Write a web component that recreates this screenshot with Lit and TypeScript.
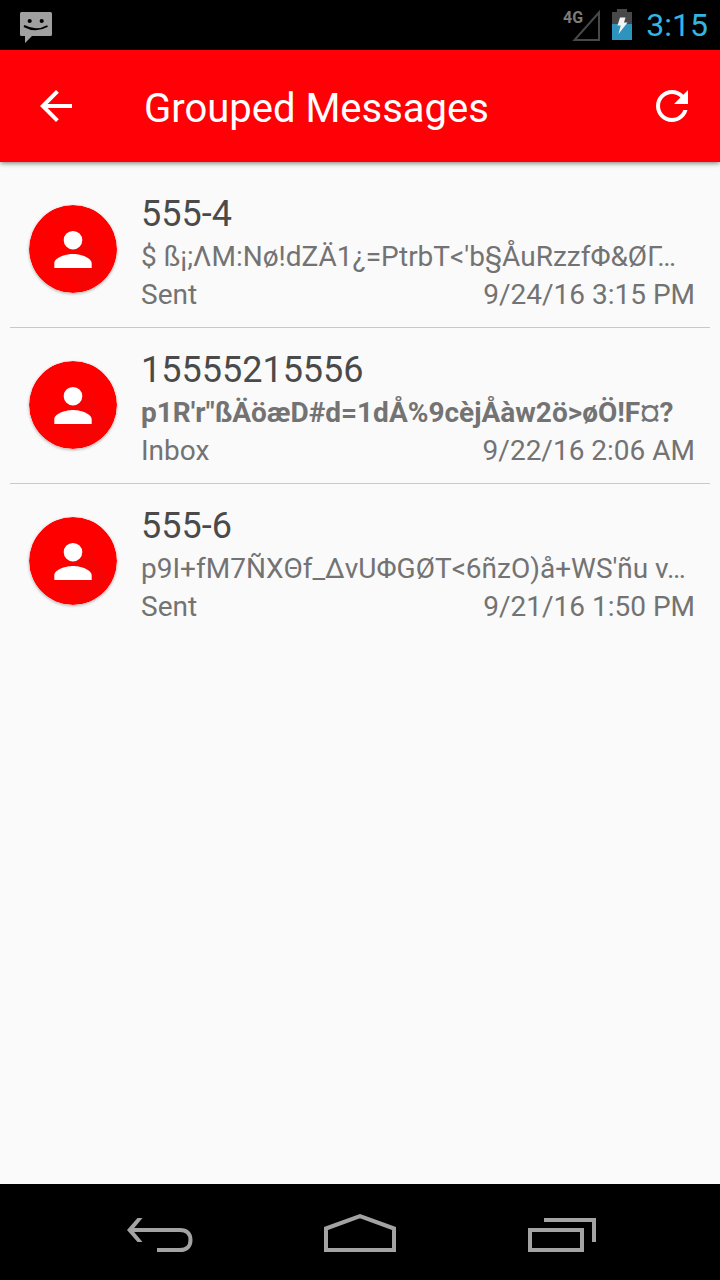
import { LitElement, html, css, svg } from "lit";
import { customElement, property } from "lit/decorators.js";

interface Message {
  sender: string;
  preview: string;
  folder: string;
  date: string;
  unread?: boolean;
}

const MESSAGES: Message[] = [
  {
    sender: "555-4",
    preview: "$ ß¡;ΛM:Nø!dZÄ1¿=PtrbT<'b§ÅuRzzfΦ&ØΓ…",
    folder: "Sent",
    date: "9/24/16 3:15 PM",
  },
  {
    sender: "15555215556",
    preview: "p1R'r\"ßÄöæD#d=1dÅ%9cèjÅàw2ö>øÖ!F¤?",
    folder: "Inbox",
    date: "9/22/16 2:06 AM",
    unread: true,
  },
  {
    sender: "555-6",
    preview: "p9I+fM7ÑXΘf_ΔvUΦGØT<6ñzO)å+WS'ñu v…",
    folder: "Sent",
    date: "9/21/16 1:50 PM",
  },
];

@customElement("status-bar")
export class StatusBar extends LitElement {
  static styles = css`
    :host {
      display: flex;
      align-items: center;
      height: 50px;
      padding: 0 12px 0 20px;
      background: #000;
      color: #33b5e5;
      font-size: 32px;
      line-height: 50px;
    }
    svg {
      display: block;
      flex: none;
    }
    .signal {
      margin-left: auto;
      margin-right: 12px;
    }
    .network {
      font: bold 16px Roboto, sans-serif;
      fill: #7c7c7c;
    }
    .battery {
      margin-right: 14px;
    }
  `;

  render() {
    return html`
      <svg width="32" height="50" viewBox="0 0 32 50" aria-hidden="true">
        <path d="M1.5 12H30.5a1.5 1.5 0 0 1 1.5 1.5V34.5a1.5 1.5 0 0 1-1.5 1.5H12L5 43V36H1.5A1.5 1.5 0 0 1 0 34.5V13.5A1.5 1.5 0 0 1 1.5 12z" fill="#a0a0a0" />
        <circle cx="9.7" cy="21" r="2.1" fill="#000" />
        <circle cx="21.7" cy="21" r="2.1" fill="#000" />
        <path d="M4 26Q16 32.5 27.5 26" fill="none" stroke="#000" stroke-width="2" />
      </svg>
      <svg class="signal" width="38" height="50" viewBox="0 0 38 50" role="img" aria-label="4G signal">
        <path d="M37 12.5V40H12.5z" fill="none" stroke="#484848" stroke-width="2" />
        <text class="network" x="1" y="23">4G</text>
      </svg>
      <svg class="battery" width="20" height="50" viewBox="0 0 20 50" role="img" aria-label="Battery charging">
        <path d="M5 9H15V12H20V24H0V12H5z" fill="#484848" />
        <path d="M0 24H20V40H0z" fill="#2f94bd" />
        <path d="M8 17.5H13.5L12 22.5H15.5L6.5 34L8.7 25.5H5.5z" fill="#f4f4f4" />
      </svg>
      <span>3:15</span>
    `;
  }
}

@customElement("app-bar")
export class AppBar extends LitElement {
  static styles = css`
    :host {
      display: flex;
      align-items: center;
      height: 112px;
      padding: 0 24px 0 32px;
      background: #ff0006;
      color: #fff;
      box-shadow: 0 1px 5px rgba(0, 0, 0, 0.55);
    }
    button {
      flex: none;
      padding: 0;
      border: 0;
      background: none;
      color: inherit;
    }
    svg {
      display: block;
      fill: currentColor;
    }
    h1 {
      flex: 1;
      margin: 0;
      padding: 6px 0 0 64px;
      font-size: 40px;
      font-weight: 400;
      line-height: 48px;
    }
  `;

  render() {
    return html`
      <button aria-label="Back">
        <svg width="48" height="48" viewBox="0 0 24 24">
          <path d="M20 11H7.83l5.59-5.59L12 4l-8 8 8 8 1.41-1.41L7.83 13H20v-2z" />
        </svg>
      </button>
      <h1>Grouped Messages</h1>
      <button aria-label="Refresh">
        <svg width="48" height="48" viewBox="0 0 24 24">
          <path d="M17.65 6.35C16.2 4.9 14.21 4 12 4c-4.42 0-7.99 3.58-7.99 8s3.57 8 7.99 8c3.73 0 6.84-2.55 7.73-6h-2.08c-.82 2.33-3.04 4-5.65 4-3.31 0-6-2.69-6-6s2.69-6 6-6c1.66 0 3.14.69 4.22 1.78L13 11h7V4l-2.35 2.35z" />
        </svg>
      </button>
    `;
  }
}

@customElement("message-row")
export class MessageRow extends LitElement {
  @property({ attribute: false }) message!: Message;

  static styles = css`
    :host {
      display: flex;
      align-items: center;
      gap: 24px;
      padding: 12px 15px 13px 19px;
      color: #737373;
      font-size: 28px;
      line-height: 38px;
    }
    .avatar {
      flex: none;
      display: block;
      border-radius: 50%;
      box-shadow: 0 1px 3px rgba(0, 0, 0, 0.3);
    }
    .body {
      flex: 1;
      min-width: 0;
      padding-top: 6px;
    }
    .sender {
      color: #4a4a4a;
      font-size: 36px;
      line-height: 48px;
    }
    .preview {
      overflow: hidden;
      white-space: nowrap;
      text-overflow: ellipsis;
    }
    .unread {
      font-weight: 700;
    }
    .meta {
      display: flex;
      justify-content: space-between;
    }
  `;

  render() {
    const { sender, preview, folder, date, unread } = this.message;
    return html`
      <svg class="avatar" width="88" height="88" viewBox="0 0 88 88" aria-hidden="true">
        <circle cx="44" cy="44" r="44" fill="#ff0000" />
        <path d="M51 28L78 55A44 44 0 0 1 56 86L26 60L44 50z" fill="#f60404" />
        <path d="M44 44.5a9.3 9.3 0 1 0 0-18.6 9.3 9.3 0 0 0 0 18.6zM44 49c-6.2 0-18.7 3.1-18.7 9.3V63H62.7V58.3C62.7 52.1 50.2 49 44 49z" fill="#fff" />
      </svg>
      <div class="body">
        <div class="sender">${sender}</div>
        <div class="preview ${unread ? "unread" : ""}">${preview}</div>
        <div class="meta"><span>${folder}</span><time>${date}</time></div>
      </div>
    `;
  }
}

@customElement("nav-bar")
export class NavBar extends LitElement {
  static styles = css`
    :host {
      display: flex;
      align-items: center;
      justify-content: center;
      gap: 128px;
      height: 96px;
      background: #000;
      color: #a3a3a3;
    }
    button {
      padding: 0;
      border: 0;
      background: none;
      color: inherit;
    }
    svg {
      display: block;
      fill: none;
      stroke: currentColor;
      stroke-width: 4;
    }
    .solid {
      fill: currentColor;
      stroke: none;
    }
  `;

  private icon(label: string, shape: unknown) {
    return html`<button aria-label=${label}>
      <svg width="72" height="48" viewBox="0 0 72 48">${shape}</svg>
    </button>`;
  }

  render() {
    return html`
      ${this.icon(
        "Back",
        svg`<path class="solid" d="M13.5 10H18.5L8.5 22L18.5 34H13.5L3 22z" />
            <path d="M6 22H56C63 22 66.5 26 66.5 32S63 42 56 42H33" />`
      )}
      ${this.icon("Home", svg`<path d="M2 20.5L36 8.2L70 20.5V42H2z" />`)}
      ${this.icon(
        "Recent apps",
        svg`<path d="M6 22H58V42H6z" /><path d="M20 12H70V34" />`
      )}
    `;
  }
}

@customElement("app-root")
export class AppRoot extends LitElement {
  static styles = css`
    :host {
      display: flex;
      flex-direction: column;
      min-height: 100vh;
      background: #fafafa;
      font-family: Roboto, "Noto Sans", sans-serif;
    }
    .bar {
      z-index: 1;
    }
    ul {
      flex: 1;
      margin: 0;
      padding: 10px;
      list-style: none;
    }
    li + li {
      border-top: 1px solid #c8c8c8;
    }
  `;

  render() {
    return html`
      <status-bar></status-bar>
      <app-bar class="bar"></app-bar>
      <ul>
        ${MESSAGES.map(
          (m) => html`<li><message-row .message=${m}></message-row></li>`
        )}
      </ul>
      <nav-bar></nav-bar>
    `;
  }
}
